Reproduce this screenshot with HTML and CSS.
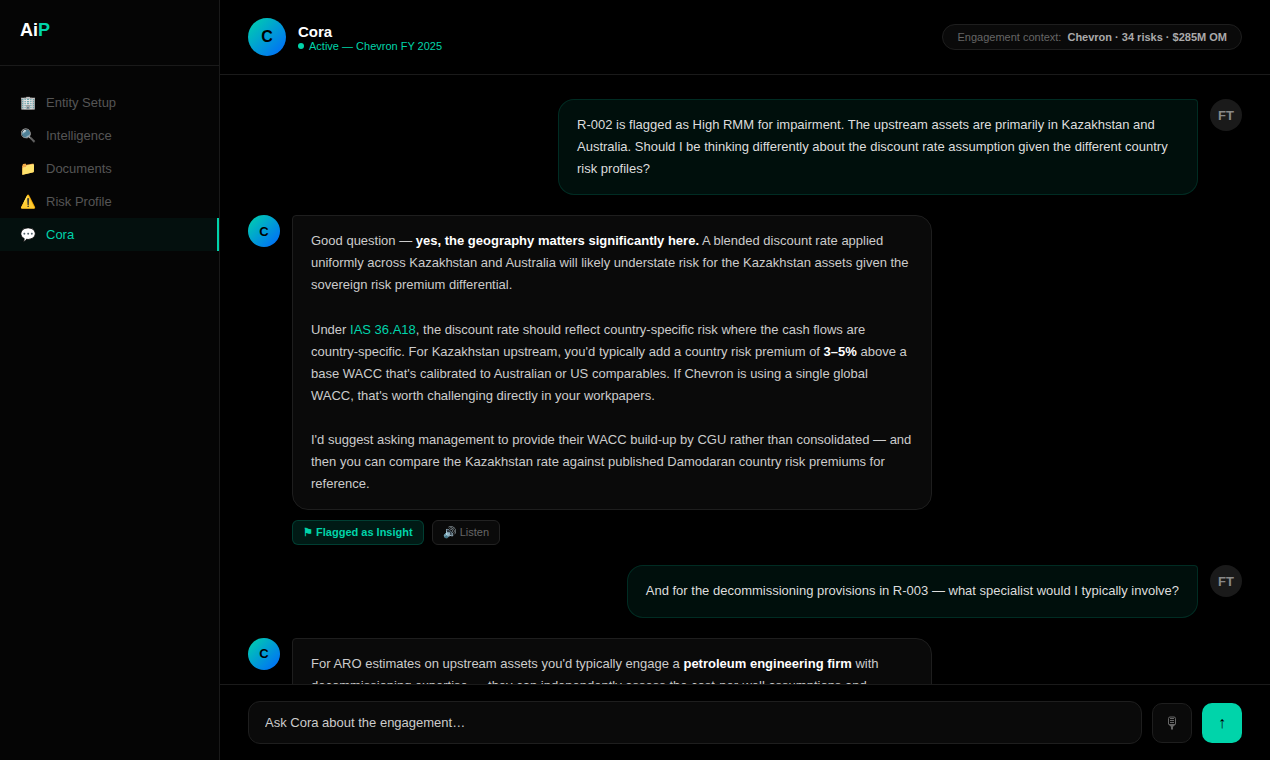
FILE: index.html
```html
<!DOCTYPE html>
<html lang="en">
<head>
<meta charset="utf-8">
<meta name="viewport" content="width=device-width, initial-scale=1">
<title>AiP – Cora</title>
<link rel="stylesheet" href="styles.css">
</head>
<body>
<div class="app">
  <aside class="sidebar">
    <div class="logo">Ai<span class="logo-accent">P</span></div>
    <nav class="nav">
      <a class="nav-item" href="#"><span class="nav-icon">🏢</span>Entity Setup</a>
      <a class="nav-item" href="#"><span class="nav-icon">🔍</span>Intelligence</a>
      <a class="nav-item" href="#"><span class="nav-icon">📁</span>Documents</a>
      <a class="nav-item" href="#"><span class="nav-icon">⚠️</span>Risk Profile</a>
      <a class="nav-item active" href="#" aria-current="page"><span class="nav-icon">💬</span>Cora</a>
    </nav>
  </aside>
  <main class="main">
    <header class="header">
      <div class="avatar cora large">C</div>
      <div class="identity">
        <h1 class="name">Cora</h1>
        <div class="status"><span class="dot"></span>Active — Chevron FY 2025</div>
      </div>
      <div class="context">Engagement context: <strong class="context-value">Chevron · 34 risks · $285M OM</strong></div>
    </header>
    <section class="messages" aria-label="Conversation">
      <article class="message user">
        <div class="avatar person">FT</div>
        <div class="content">
          <p class="bubble">R-002 is flagged as High RMM for impairment. The upstream assets are primarily in Kazakhstan and Australia. Should I be thinking differently about the discount rate assumption given the different country risk profiles?</p>
        </div>
      </article>
      <article class="message">
        <div class="avatar cora">C</div>
        <div class="content">
          <p class="bubble">Good question — <strong>yes, the geography matters significantly here.</strong> A blended discount rate applied uniformly across Kazakhstan and Australia will likely understate risk for the Kazakhstan assets given the sovereign risk premium differential.<br><br>Under <span class="citation">IAS 36.A18</span>, the discount rate should reflect country-specific risk where the cash flows are country-specific. For Kazakhstan upstream, you'd typically add a country risk premium of <strong>3–5%</strong> above a base WACC that's calibrated to Australian or US comparables. If Chevron is using a single global WACC, that's worth challenging directly in your workpapers.<br><br>I'd suggest asking management to provide their WACC build-up by CGU rather than consolidated — and then you can compare the Kazakhstan rate against published Damodaran country risk premiums for reference.</p>
          <div class="actions">
            <button class="action flagged" type="button">⚑ Flagged as Insight</button>
            <button class="action" type="button">🔊 Listen</button>
          </div>
        </div>
      </article>
      <article class="message user">
        <div class="avatar person">FT</div>
        <div class="content">
          <p class="bubble">And for the decommissioning provisions in R-003 — what specialist would I typically involve?</p>
        </div>
      </article>
      <article class="message">
        <div class="avatar cora">C</div>
        <div class="content">
          <p class="bubble">For ARO estimates on upstream assets you'd typically engage a <strong>petroleum engineering firm</strong> with decommissioning expertise — they can independently assess the cost-per-well assumptions and</p>
        </div>
      </article>
    </section>
    <form class="composer">
      <input class="prompt" type="text" aria-label="Ask Cora" placeholder="Ask Cora about the engagement…">
      <button class="tool" type="button" aria-label="Voice input">
        <svg class="mic" viewBox="0 0 10 14" width="10" height="14" fill="none" stroke="currentColor" aria-hidden="true">
          <path d="M1.5 8V2.5Q1.5 1 3 1H7Q8.500 1 8.500 2.500V8M3 2.500H7M3 4.500H7M3 6.500H7M1.500 8.500H8.500"/>
          <path d="M1.500 8.500H8.500L6.500 10.500H3.500Z" fill="currentColor" stroke="none"/>
          <path d="M5 10V13.500" stroke-width="2"/>
        </svg>
      </button>
      <button class="tool send" type="submit" aria-label="Send">↑</button>
    </form>
  </main>
</div>
</body>
</html>
```
FILE: styles.css
```css
* {
  box-sizing: border-box;
  margin: 0;
}

body,
button,
input {
  font-family: "Liberation Sans", Arial, sans-serif;
}

body {
  background: #000;
  color: #fff;
  font-size: 13px;
}

.app {
  display: flex;
  height: 100vh;
  overflow: hidden;
}

.sidebar {
  flex: 0 0 220px;
  background: #050505;
  border-right: 1px solid #1a1a1a;
}

.logo {
  padding: 20px 20px 25px;
  border-bottom: 1px solid #1a1a1a;
  font-size: 18px;
  line-height: 20px;
  font-weight: 700;
}

.logo-accent {
  color: #00d4aa;
}

.nav {
  display: flex;
  flex-direction: column;
  padding: 20px 0;
}

.nav-item {
  display: flex;
  align-items: center;
  gap: 10px;
  padding: 9px 20px;
  color: #555;
  line-height: 15px;
  text-decoration: none;
}

.nav-item.active {
  background: rgba(0, 212, 170, 0.06);
  border-right: 2px solid #00d4aa;
  color: #00d4aa;
}

.nav-icon {
  width: 16px;
}

.main {
  flex: 1;
  min-width: 0;
  display: flex;
  flex-direction: column;
}

.header {
  display: flex;
  align-items: center;
  gap: 12px;
  padding: 18px 28px;
  border-bottom: 1px solid #1a1a1a;
}

.avatar {
  flex: none;
  display: flex;
  align-items: center;
  justify-content: center;
  width: 32px;
  height: 32px;
  border-radius: 50%;
  font-size: 13px;
  font-weight: 700;
}

.avatar.cora {
  background: linear-gradient(135deg, #00d4aa, #0066ff);
  color: #000;
}

.avatar.person {
  background: #1a1a1a;
  color: #888;
}

.avatar.large {
  width: 38px;
  height: 38px;
  font-size: 16px;
}

.name {
  font-size: 15px;
  line-height: 17px;
  font-weight: 700;
}

.status {
  display: flex;
  align-items: center;
  gap: 5px;
  color: #00d4aa;
  font-size: 11px;
  line-height: 12px;
}

.dot {
  width: 6px;
  height: 6px;
  border-radius: 50%;
  background: #00d4aa;
}

.context {
  display: flex;
  gap: 6px;
  margin-left: auto;
  padding: 6px 14px;
  border: 1px solid #1e1e1e;
  border-radius: 20px;
  background: #0a0a0a;
  color: #666;
  font-size: 11px;
  line-height: 12px;
}

.context-value {
  color: #aaa;
}

.messages {
  flex: 1;
  min-height: 0;
  display: flex;
  flex-direction: column;
  gap: 20px;
  padding: 24px 28px;
  overflow: hidden;
}

.message {
  flex: none;
  display: flex;
  gap: 12px;
}

.message.user {
  flex-direction: row-reverse;
}

.content {
  max-width: 640px;
}

.bubble {
  padding: 14px 18px;
  border: 1px solid #1e1e1e;
  border-radius: 4px 16px 16px 16px;
  background: #0a0a0a;
  color: #ccc;
  line-height: 1.7;
}

.bubble strong {
  color: #fff;
}

.user .bubble {
  border-color: rgba(0, 212, 170, 0.15);
  border-radius: 16px 4px 16px 16px;
  background: rgba(0, 212, 170, 0.07);
  color: #ddd;
}

.citation {
  color: #00d4aa;
}

.actions {
  display: flex;
  gap: 8px;
  margin-top: 10px;
}

.action {
  padding: 5px 10px;
  border: 1px solid #222;
  border-radius: 6px;
  background: #0a0a0a;
  color: #666;
  font-size: 11px;
}

.action.flagged {
  border-color: rgba(0, 212, 170, 0.2);
  background: rgba(0, 212, 170, 0.12);
  color: #00d4aa;
  font-weight: 700;
}

.composer {
  display: flex;
  align-items: center;
  gap: 10px;
  padding: 16px 28px;
  border-top: 1px solid #1a1a1a;
}

.prompt {
  flex: 1;
  min-width: 0;
  padding: 13px 16px;
  border: 1px solid #1e1e1e;
  border-radius: 12px;
  background: #0a0a0a;
  color: #ccc;
  font-size: 13px;
}

.prompt::placeholder {
  color: #ccc;
}

.tool {
  flex: none;
  display: flex;
  align-items: center;
  justify-content: center;
  width: 40px;
  height: 40px;
  padding: 0;
  border: 1px solid #1e1e1e;
  border-radius: 10px;
  background: #0a0a0a;
  color: #666;
  font-size: 16px;
}

.tool.send {
  border: 0;
  background: #00d4aa;
  color: #000;
}
```
